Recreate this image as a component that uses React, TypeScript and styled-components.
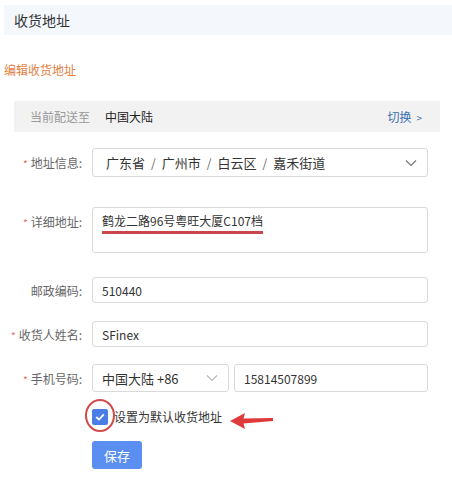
import styled, { createGlobalStyle } from 'styled-components';

const GlobalStyle = createGlobalStyle`
  body {
    margin: 0;
    background: #fff;
    font-family: "Noto Sans CJK SC", "Noto Sans", sans-serif;
    color: #333;
  }
`;

const Page = styled.div`
  width: 452px;
  padding-top: 5px;
`;

const Header = styled.div`
  margin-left: 4px;
  height: 30px;
  line-height: 30px;
  padding-left: 10px;
  background: #f4f8fd;
  font-size: 14px;
  color: #333;
`;

const EditTitle = styled.div`
  margin-top: 26px;
  padding-left: 4px;
  font-size: 12px;
  line-height: 17px;
  color: #e3803f;
`;

const DeliveryBar = styled.div`
  display: flex;
  align-items: center;
  margin: 23px 0 0 14px;
  width: 426px;
  height: 31px;
  box-sizing: border-box;
  padding: 0 18px 0 16px;
  background: #f2f2f2;
  font-size: 12px;
`;

const Muted = styled.span`
  color: #999;
  width: 75px;
`;

const Region = styled.span`
  color: #222;
  flex: 1;
`;

const SwitchLink = styled.span`
  color: #3a6fb0;
  font-size: 12px;

  &::after {
    content: '>';
    margin-left: 5px;
    font-size: 10px;
  }
`;

const Row = styled.div<{ $top: number; $alignTop?: boolean }>`
  display: flex;
  align-items: ${(p) => (p.$alignTop ? 'flex-start' : 'center')};
  margin-top: ${(p) => p.$top}px;
`;

const Label = styled.div<{ $alignTop?: boolean }>`
  width: 82px;
  margin-right: 10px;
  text-align: right;
  font-size: 12px;
  color: #666;
  white-space: nowrap;
  padding-top: ${(p) => (p.$alignTop ? '6px' : '0')};
`;

const Star = styled.span`
  color: #e26a5a;
  font-size: 10px;
  margin-right: 3px;
`;

const Box = styled.div<{ $width?: number; $height: number }>`
  display: flex;
  align-items: center;
  width: ${(p) => p.$width ?? 336}px;
  height: ${(p) => p.$height}px;
  box-sizing: border-box;
  border: 1px solid #d9d9d9;
  border-radius: 3px;
  padding: 0 9px;
  font-size: 12px;
  color: #333;
  background: #fff;
`;

const SelectBox = styled(Box)<{ $padLeft?: number }>`
  justify-content: space-between;
  padding: 0 10px 0 ${(p) => p.$padLeft ?? 13}px;
  font-size: 13px;
`;

const Sep = styled.span`
  color: #666;
  margin: 0 6px;
  font-size: 12px;
`;

const TextArea = styled(Box)`
  align-items: flex-start;
  padding-top: 4px;
`;

const Marked = styled.span`
  display: inline-block;
  border-bottom: 3px solid #c9474b;
  padding-bottom: 1px;
  line-height: 18px;
`;

const PhoneGroup = styled.div`
  display: flex;
  gap: 5px;
`;

const CheckRow = styled.div`
  position: relative;
  display: flex;
  align-items: center;
  margin: 16px 0 0 92px;
  font-size: 12px;
  color: #333;
`;

const CheckBox = styled.span`
  display: inline-flex;
  align-items: center;
  justify-content: center;
  width: 16px;
  height: 16px;
  border-radius: 2px;
  background: #4a7de6;
  margin-right: 6px;
`;

const RedCircle = styled.span`
  position: absolute;
  left: -7px;
  top: -9px;
  width: 30px;
  height: 33px;
  border: 2.5px solid #cf4a4a;
  border-radius: 50%;
  box-sizing: border-box;
`;

const Arrow = styled.svg`
  position: absolute;
  left: 138px;
  top: 4px;
`;

const SaveButton = styled.button`
  margin: 16px 0 0 92px;
  width: 50px;
  height: 28px;
  border: none;
  border-radius: 3px;
  background: #5a8ef0;
  color: #fff;
  font-family: inherit;
  font-size: 13px;
  padding: 0;
`;

function Chevron({ color }: { color: string }) {
  return (
    <svg width="12" height="8" viewBox="0 0 12 8">
      <path d="M1 1.5 L6 6.5 L11 1.5" fill="none" stroke={color} strokeWidth="1.2" />
    </svg>
  );
}

export default function App() {
  return (
    <Page>
      <GlobalStyle />
      <Header>收货地址</Header>
      <EditTitle>编辑收货地址</EditTitle>
      <DeliveryBar>
        <Muted>当前配送至</Muted>
        <Region>中国大陆</Region>
        <SwitchLink>切换</SwitchLink>
      </DeliveryBar>

      <Row $top={16}>
        <Label><Star>*</Star>地址信息:</Label>
        <SelectBox $height={29}>
          <span>
            广东省<Sep>/</Sep>广州市<Sep>/</Sep>白云区<Sep>/</Sep>嘉禾街道
          </span>
          <Chevron color="#777" />
        </SelectBox>
      </Row>

      <Row $top={30} $alignTop>
        <Label $alignTop><Star>*</Star>详细地址:</Label>
        <TextArea $height={46}>
          <Marked>鹤龙二路96号粤旺大厦C107档</Marked>
        </TextArea>
      </Row>

      <Row $top={24}>
        <Label>邮政编码:</Label>
        <Box $height={26}>510440</Box>
      </Row>

      <Row $top={18}>
        <Label><Star>*</Star>收货人姓名:</Label>
        <Box $height={26}>SFinex</Box>
      </Row>

      <Row $top={17}>
        <Label><Star>*</Star>手机号码:</Label>
        <PhoneGroup>
          <SelectBox $width={137} $height={28} $padLeft={9}>
            <span>中国大陆 +86</span>
            <Chevron color="#bbb" />
          </SelectBox>
          <Box $width={194} $height={28}>15814507899</Box>
        </PhoneGroup>
      </Row>

      <CheckRow>
        <CheckBox>
          <svg width="10" height="8" viewBox="0 0 10 8">
            <path d="M1.2 4 L4 6.6 L8.8 1.4" fill="none" stroke="#fff" strokeWidth="1.8" />
          </svg>
        </CheckBox>
        设置为默认收货地址
        <RedCircle />
        <Arrow width="43" height="18" viewBox="0 0 43 18">
          <path d="M0 9 L15 1 L13.5 6.5 L43 6 L43 9 L13.5 11.5 L15 17 Z" fill="#e0393a" />
        </Arrow>
      </CheckRow>

      <SaveButton>保存</SaveButton>
    </Page>
  );
}
